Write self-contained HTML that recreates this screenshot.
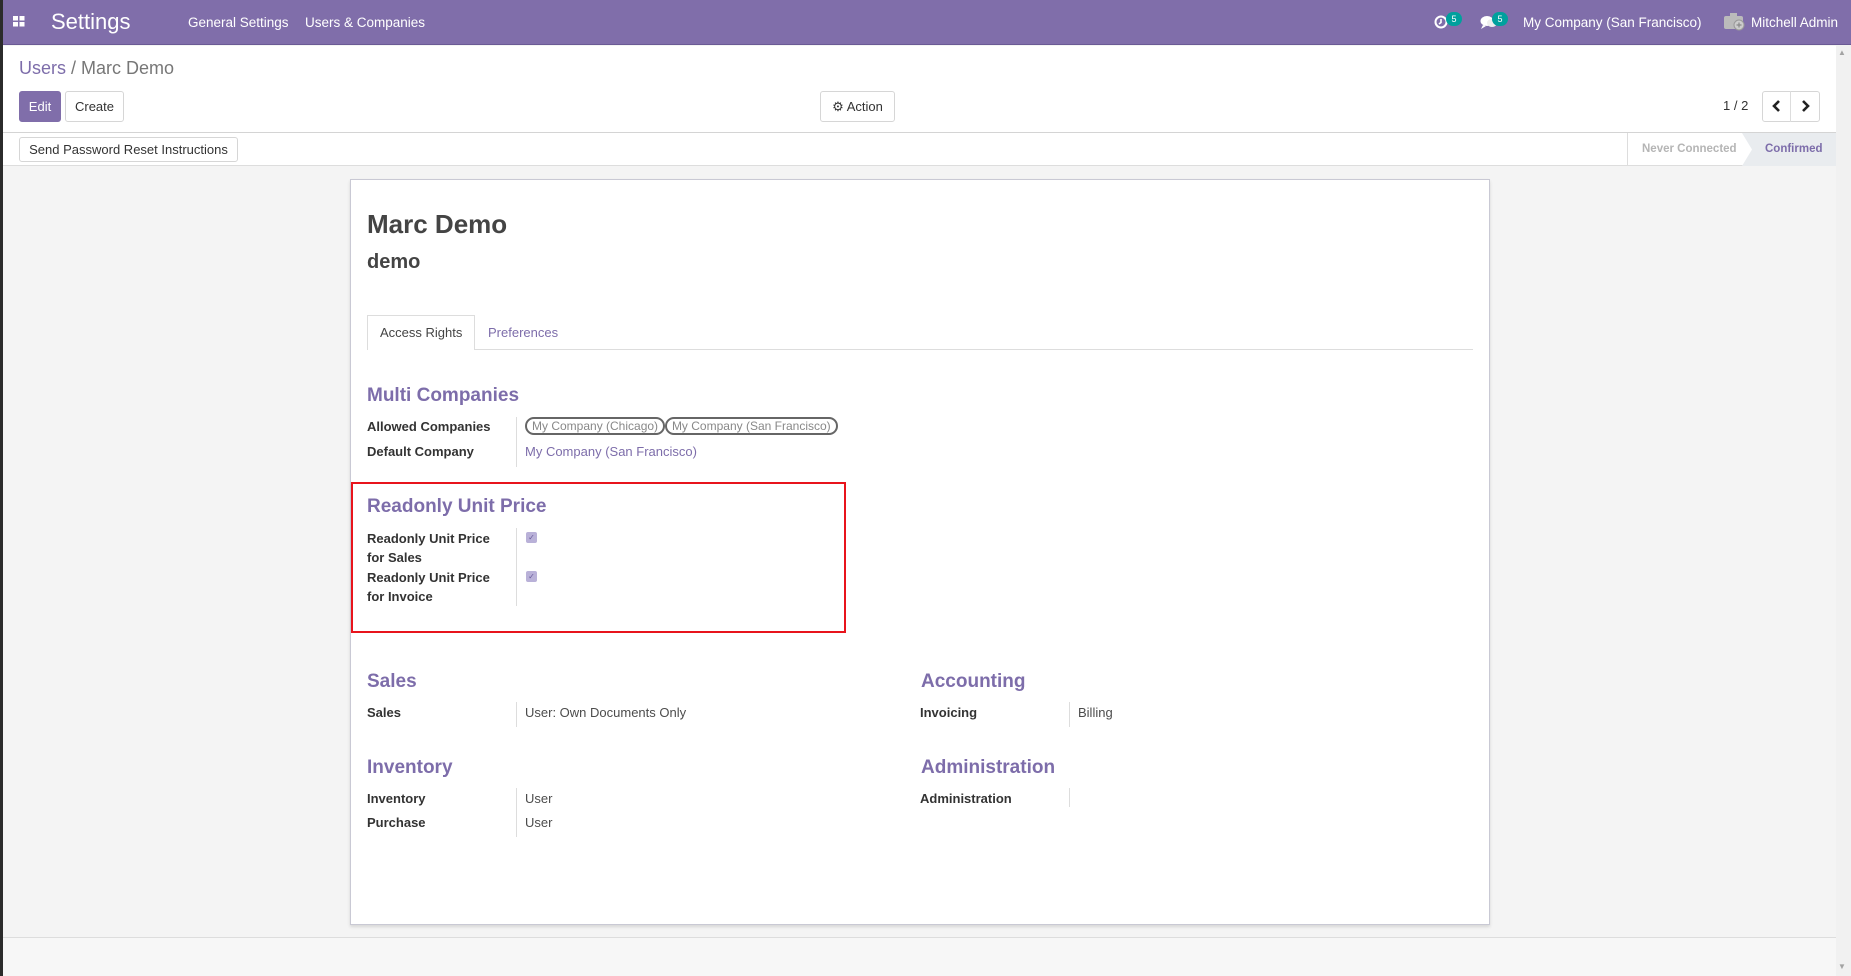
<!DOCTYPE html>
<html><head><meta charset="utf-8"><style>
*{box-sizing:border-box;margin:0;padding:0}
body{width:1851px;height:976px;overflow:hidden;position:relative;font-family:"Liberation Sans",sans-serif;font-size:14px;color:#4c4c4c;background:#f4f4f4}
.a{position:absolute;white-space:nowrap}
.nav{left:0;top:0;width:1851px;height:45px;background:#806eaa;border-bottom:1px solid #6a5a94}
.nt{color:#fff;font-size:13.5px;top:15px}
.btn{position:absolute;border:1px solid #d6d6d6;border-radius:3px;background:#fff;font-size:13px;color:#333;text-align:center}
.h{color:#7d6daa;font-weight:bold;font-size:19px}
.lb{font-weight:bold;color:#333;font-size:13px}
.v{font-size:13px}
.sep{position:absolute;width:1px;background:#ddd}
.badge{position:absolute;width:16px;height:14px;border-radius:7px;background:#00a09d;color:#fff;font-size:9px;text-align:center;line-height:14px}
.tag{display:inline-block;border:2px solid #666;border-radius:9px;padding:0 5px;height:18px;line-height:14px;font-size:12px;color:#888}
.cb{position:absolute;width:11px;height:11px;background:#b9b1d8;border-radius:2px;color:#6a5d9c;font-size:8px;line-height:11px;text-align:center}
</style></head><body>
<div class="a" style="left:0;top:0;width:3px;height:976px;background:#2b2b2b;z-index:5"></div>
<div class="a nav"></div>
<svg class="a" style="left:13px;top:16px" width="12" height="11"><rect x="0" y="0" width="5" height="4.5" fill="#fff"/><rect x="6.5" y="0" width="5" height="4.5" fill="#fff"/><rect x="0" y="6" width="5" height="4.5" fill="#fff"/><rect x="6.5" y="6" width="5" height="4.5" fill="#fff"/></svg>
<div class="a" style="left:51px;top:9px;color:#fff;font-size:22px">Settings</div>
<div class="a nt" style="left:188px">General Settings</div>
<div class="a nt" style="left:305px">Users &amp; Companies</div>
<svg class="a" style="left:1434px;top:15px" width="14" height="14"><circle cx="7" cy="7" r="5.5" fill="none" stroke="#fff" stroke-width="2"/><path d="M7 4v3.5l-2 1.5" stroke="#fff" stroke-width="1.6" fill="none"/></svg>
<div class="badge" style="left:1446px;top:12px">5</div>
<svg class="a" style="left:1480px;top:15px" width="18" height="14"><ellipse cx="7" cy="6" rx="6.5" ry="5" fill="#fff"/><path d="M3 10l-2 4 5-3z" fill="#fff"/><ellipse cx="12" cy="8" rx="5" ry="4" fill="#eee"/></svg>
<div class="badge" style="left:1492px;top:12px">5</div>
<div class="a nt" style="left:1523px">My Company (San Francisco)</div>
<svg class="a" style="left:1724px;top:13px" width="22" height="18"><rect x="0" y="3" width="19" height="13" rx="2" fill="#bbb"/><rect x="6" y="0" width="7" height="4" fill="#bbb"/><circle cx="15" cy="12" r="5" fill="#ccc" stroke="#999"/><path d="M15 9.5v5M12.5 12h5" stroke="#888" stroke-width="1.2"/></svg>
<div class="a nt" style="left:1751px">Mitchell Admin</div>

<div class="a" style="left:3px;top:46px;width:1833px;height:120px;background:#fff;border-bottom:1px solid #ddd"></div>
<div class="a" style="left:3px;top:132px;width:1833px;height:1px;background:#d4d4d4"></div>
<div class="a" style="left:19px;top:58px;font-size:18px;color:#777"><span style="color:#7d6daa">Users</span> / Marc Demo</div>
<div class="btn" style="left:19px;top:91px;width:42px;height:31px;line-height:29px;background:#806eaa;border-color:#806eaa;color:#fff">Edit</div>
<div class="btn" style="left:65px;top:91px;width:59px;height:31px;line-height:29px">Create</div>
<div class="btn" style="left:820px;top:91px;width:75px;height:31px;line-height:29px">&#9881; Action</div>
<div class="a" style="left:1723px;top:98px;font-size:13px;color:#333">1 / 2</div>
<div class="btn" style="left:1762px;top:91px;width:58px;height:31px"></div>
<div class="a" style="left:1790px;top:91px;width:1px;height:31px;background:#ddd"></div>
<svg class="a" style="left:1772px;top:100px" width="10" height="12"><path d="M7 1L2 6l5 5" stroke="#222" stroke-width="2.6" fill="none"/></svg>
<svg class="a" style="left:1800px;top:100px" width="10" height="12"><path d="M3 1l5 5-5 5" stroke="#222" stroke-width="2.6" fill="none"/></svg>
<div class="btn" style="left:19px;top:137px;width:219px;height:25px;line-height:23px">Send Password Reset Instructions</div>
<div class="a" style="left:1627px;top:133px;width:1px;height:33px;background:#ddd"></div>
<div class="a" style="left:1642px;top:143px;font-size:11.5px;font-weight:bold;color:#b5b5b5">Never Connected</div>
<svg class="a" style="left:1742px;top:133px" width="94" height="33"><path d="M0 0H94V33H0L10 16.5Z" fill="#e9ecef"/></svg>
<div class="a" style="left:1765px;top:143px;font-size:11.5px;font-weight:bold;color:#7d6daa">Confirmed</div>

<div class="a" style="left:1836px;top:45px;width:15px;height:931px;background:#f1f1f1"></div>
<div class="a" style="left:1838px;top:48px;font-size:8px;color:#a3a3a3">&#9650;</div>
<div class="a" style="left:1838px;top:962px;font-size:8px;color:#a3a3a3">&#9660;</div>

<div class="a" style="left:3px;top:937px;width:1833px;height:39px;background:#f7f7f7;border-top:1px solid #ddd"></div>

<div class="a" style="left:350px;top:179px;width:1140px;height:746px;background:#fff;border:1px solid #c9c9d4;box-shadow:0 2px 3px rgba(0,0,0,.12)"></div>
<div class="a" style="left:367px;top:209px;font-size:26px;font-weight:bold;color:#444">Marc Demo</div>
<div class="a" style="left:367px;top:251px;font-size:20px;font-weight:bold;color:#444">demo</div>

<div class="a" style="left:367px;top:349px;width:1106px;height:1px;background:#ddd"></div>
<div class="a" style="left:367px;top:315px;width:108px;height:35px;background:#fff;border:1px solid #ddd;border-bottom:none"></div>
<div class="a" style="left:380px;top:325px;font-size:13px;color:#444">Access Rights</div>
<div class="a" style="left:488px;top:325px;font-size:13px;color:#7d6daa">Preferences</div>

<div class="a h" style="left:367px;top:385px">Multi Companies</div>
<div class="a lb" style="left:367px;top:419px">Allowed Companies</div>
<div class="a lb" style="left:367px;top:444px">Default Company</div>
<div class="sep" style="left:516px;top:417px;height:50px"></div>
<div class="a" style="left:525px;top:417px"><span class="tag">My Company (Chicago)</span> <span class="tag" style="margin-left:-4px">My Company (San Francisco)</span></div>
<div class="a v" style="left:525px;top:444px;color:#7d6daa">My Company (San Francisco)</div>

<div class="a" style="left:351px;top:482px;width:495px;height:151px;border:2px solid #e8141c"></div>
<div class="a h" style="left:367px;top:496px">Readonly Unit Price</div>
<div class="a lb" style="left:367px;top:529px;line-height:19px">Readonly Unit Price<br>for Sales</div>
<div class="a lb" style="left:367px;top:568px;line-height:19px">Readonly Unit Price<br>for Invoice</div>
<div class="sep" style="left:516px;top:528px;height:78px"></div>
<div class="cb" style="left:526px;top:532px">&#10003;</div>
<div class="cb" style="left:526px;top:571px">&#10003;</div>

<div class="a h" style="left:367px;top:671px">Sales</div>
<div class="a lb" style="left:367px;top:705px">Sales</div>
<div class="sep" style="left:516px;top:702px;height:25px"></div>
<div class="a v" style="left:525px;top:705px">User: Own Documents Only</div>
<div class="a h" style="left:921px;top:671px">Accounting</div>
<div class="a lb" style="left:920px;top:705px">Invoicing</div>
<div class="sep" style="left:1069px;top:702px;height:25px"></div>
<div class="a v" style="left:1078px;top:705px">Billing</div>

<div class="a h" style="left:367px;top:757px">Inventory</div>
<div class="a lb" style="left:367px;top:791px">Inventory</div>
<div class="a lb" style="left:367px;top:815px">Purchase</div>
<div class="sep" style="left:516px;top:788px;height:49px"></div>
<div class="a v" style="left:525px;top:791px">User</div>
<div class="a v" style="left:525px;top:815px">User</div>
<div class="a h" style="left:921px;top:757px">Administration</div>
<div class="a lb" style="left:920px;top:791px">Administration</div>
<div class="sep" style="left:1069px;top:788px;height:19px"></div>
</body></html>
